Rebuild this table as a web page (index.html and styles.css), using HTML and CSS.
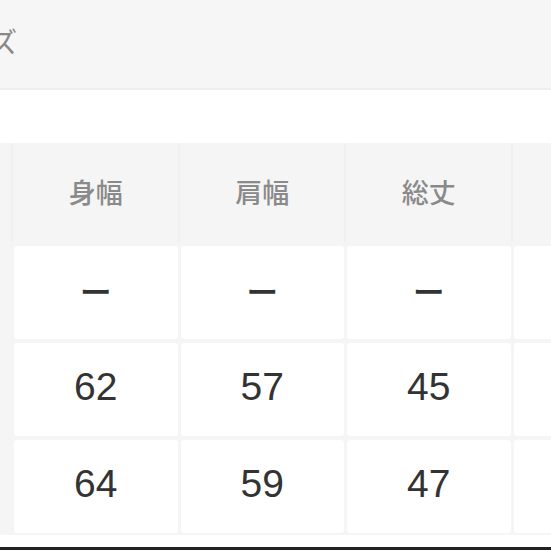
FILE: index.html
```html
<!DOCTYPE html>
<html lang="ja">
<head>
<meta charset="utf-8">
<link rel="stylesheet" href="styles.css">
</head>
<body>
<div class="page">
  <div class="top">
    <div class="title">サイズ</div>
  </div>
  <div class="spacer"></div>
  <div class="table">
    <div class="hcell first"></div>
    <div class="hcell">身幅</div>
    <div class="hcell">肩幅</div>
    <div class="hcell">総丈</div>
    <div class="hcell"></div>

    <div class="lcell"></div>
    <div class="cell"><span class="dash">ー</span></div>
    <div class="cell"><span class="dash">ー</span></div>
    <div class="cell"><span class="dash">ー</span></div>
    <div class="cell"></div>

    <div class="lcell"></div>
    <div class="cell">62</div>
    <div class="cell">57</div>
    <div class="cell">45</div>
    <div class="cell"></div>

    <div class="lcell"></div>
    <div class="cell">64</div>
    <div class="cell">59</div>
    <div class="cell">47</div>
    <div class="cell"></div>
  </div>
  <div class="after"></div>
  <div class="bar"></div>
</div>
</body>
</html>
```

FILE: styles.css
```css
html, body {
  margin: 0;
  padding: 0;
  background: #ffffff;
}
.page {
  width: 551px;
  height: 551px;
  overflow: hidden;
  display: flex;
  flex-direction: column;
  font-family: "Liberation Sans", "Noto Sans CJK JP", sans-serif;
}
.top {
  height: 88px;
  flex: none;
  background: #f6f6f6;
  border-bottom: 2px solid #eeeeee;
  display: flex;
  align-items: center;
}
.title {
  margin-left: -66px;
  margin-top: -6px;
  font-family: "Noto Sans CJK JP", sans-serif;
  font-size: 28px;
  color: #888888;
  white-space: nowrap;
}
.spacer {
  height: 53px;
  flex: none;
}
.table {
  flex: none;
  background: #f5f5f5;
  display: grid;
  grid-template-columns: 100px repeat(4, 163.5px);
  grid-template-rows: 99px repeat(3, 93px);
  column-gap: 3px;
  row-gap: 4px;
  margin-left: -89px;
  padding-bottom: 2px;
}
.hcell {
  display: flex;
  align-items: center;
  justify-content: center;
  font-family: "Noto Sans CJK JP", sans-serif;
  font-weight: 500;
  font-size: 27px;
  color: #8a8a8a;
  padding-bottom: 2px;
  box-shadow: 2px 0 0 #f0f0f0;
}
.lcell {
  background: #f5f5f5;
}
.cell {
  background: #ffffff;
  border-radius: 3px;
  display: flex;
  align-items: center;
  justify-content: center;
  font-size: 39px;
  color: #333333;
  padding-bottom: 6px;
}
.dash {
  font-family: "Noto Sans CJK JP", sans-serif;
  font-weight: 500;
  font-size: 32px;
  color: #333333;
}
.after {
  height: 12px;
  flex: none;
}
.bar {
  height: 3px;
  flex: none;
  background: #222222;
}
```
